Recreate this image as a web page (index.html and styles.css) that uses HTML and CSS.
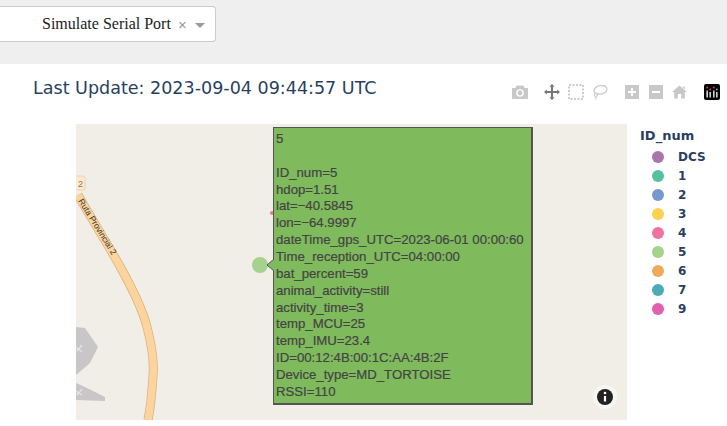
FILE: index.html
```html
<!DOCTYPE html>
<html lang="en">
<head>
    <meta charset="UTF-8">
    <title>Last Update</title>
    <link rel="stylesheet" href="styles.css">
</head>
<body>
    <div class="top-bar">
        <div class="dropdown">
            <span class="dropdown-value">Simulate Serial Port</span>
            <span class="dropdown-clear">&times;</span>
            <span class="dropdown-arrow"></span>
        </div>
    </div>

    <div class="graph">
        <div class="graph-head">
            <div class="graph-title">Last Update: 2023-09-04 09:44:57 UTC</div>
            <div class="modebar">
                <svg class="mode-icon camera" viewBox="0 0 16 16"><path d="M0 4h3.500l1.200-2.500h6.600L12.500 4H16v11H0z" fill="#c8c8c8"/><circle cx="8" cy="9" r="3.800" fill="#fff"/><circle cx="8" cy="9" r="2.400" fill="#c8c8c8"/></svg>
                <svg class="mode-icon pan" viewBox="0 0 16 16"><path d="M8 0l2.600 2.800H9v4.200h4.200V5.400L16 8l-2.800 2.600V9H9v4.200h1.600L8 16l-2.600-2.800H7V9H2.800v1.600L0 8l2.800-2.600V7H7V2.800H5.400z" fill="#777"/></svg>
                <svg class="mode-icon select" viewBox="0 0 16 16"><rect x="1" y="1" width="14" height="14" fill="none" stroke="#ccc" stroke-width="2" stroke-dasharray="2 1.500"/></svg>
                <svg class="mode-icon lasso" viewBox="0 0 16 16"><path d="M2 7c0-3 3-5.500 7-5.500 3.500 0 6 1.500 6 3.800 0 3-4 5-8 4.700C4 9.800 2 9 2 7z" fill="none" stroke="#ccc" stroke-width="1.300"/><circle cx="3.800" cy="11" r="1.500" fill="none" stroke="#ccc" stroke-width="1.200"/><path d="M4 12.500c.4 1 .2 2-.5 3" fill="none" stroke="#ccc" stroke-width="1.200"/></svg>
                <svg class="mode-icon zoom-in" viewBox="0 0 14 14"><rect width="14" height="14" fill="#c8c8c8"/><path d="M3 7h8M7 3v8" stroke="#fff" stroke-width="2"/></svg>
                <svg class="mode-icon zoom-out" viewBox="0 0 14 14"><rect width="14" height="14" fill="#c8c8c8"/><path d="M3 7h8" stroke="#fff" stroke-width="2"/></svg>
                <svg class="mode-icon home" viewBox="0 0 16 14"><path d="M8 0l8 7h-2.300v7H9.800V9.200H6.200V14H2.300V7H0zM11.500 1h2v3l-2-1.800z" fill="#c8c8c8"/></svg>
                <svg class="mode-icon logo" viewBox="0 0 16 16">
                    <rect width="16" height="16" rx="2" fill="#000"/>
                    <g fill="#fff">
                        <rect x="2.500" y="6.500" width="1.300" height="7"/>
                        <rect x="5.500" y="8" width="1.300" height="5.500"/>
                        <rect x="9.200" y="6.500" width="1.300" height="7"/>
                        <rect x="12.200" y="8" width="1.300" height="5.500"/>
                    </g>
                    <circle cx="3.200" cy="3.500" r=".9" fill="#ef3b7b"/>
                    <circle cx="6.200" cy="5.500" r=".9" fill="#ef3b7b"/>
                    <circle cx="9.800" cy="3.500" r=".9" fill="#ef3b7b"/>
                    <circle cx="12.800" cy="5.500" r=".9" fill="#5fc3e4"/>
                </svg>
            </div>
        </div>

        <div class="plot-row">
            <div class="map">
                <svg class="map-base" viewBox="0 0 551 296">
                    <path d="M0 203l9 1 13 19-8 16-14 12z" fill="#c8c6c6"/>
                    <path d="M0 259l9 4 20 10v4l-29-1z" fill="#c8c6c6"/>
                    <path d="M0 223l6 5M6 221l-5 6M0 267l6 4M6 265l-5 6" stroke="#e6e4e2" stroke-width="1.200"/>
                    <path d="M2 71C16 96 33 122 46 146C58 168 67 187 71 203C76 222 78 240 77 252C76 268 75 282 72 296" fill="none" stroke="#d8b378" stroke-width="9"/>
                    <path d="M2 71C16 96 33 122 46 146C58 168 67 187 71 203C76 222 78 240 77 252C76 268 75 282 72 296" fill="none" stroke="#fdd49e" stroke-width="7.500"/>
                    <text class="road-label" transform="translate(2 77) rotate(58)">Ruta Provincial 2</text>
                    <rect x="-6" y="52" width="15" height="14" rx="2" fill="#fbe9d2" stroke="#f0d3ad"/>
                    <text class="road-shield" x="2" y="63">2</text>
                    <circle cx="196" cy="89" r="2" fill="#ee7299"/>
                    <circle cx="184" cy="141" r="8" fill="#a5d28c"/>
                    <circle cx="529" cy="273" r="12" fill="#f7f6f3"/>
                    <circle cx="529" cy="273" r="8" fill="#222"/>
                    <circle cx="529" cy="269" r="1.300" fill="#fff"/>
                    <path d="M529 272v5.500" stroke="#fff" stroke-width="2.200"/>
                </svg>
                <div class="hover-box">
                    <div class="hover-line">5</div>
                    <div class="hover-line">&nbsp;</div>
                    <div class="hover-line">ID_num=5</div>
                    <div class="hover-line">hdop=1.51</div>
                    <div class="hover-line">lat=−40.5845</div>
                    <div class="hover-line">lon=−64.9997</div>
                    <div class="hover-line">dateTime_gps_UTC=2023-06-01 00:00:60</div>
                    <div class="hover-line">Time_reception_UTC=04:00:00</div>
                    <div class="hover-line">bat_percent=59</div>
                    <div class="hover-line">animal_activity=still</div>
                    <div class="hover-line">activity_time=3</div>
                    <div class="hover-line">temp_MCU=25</div>
                    <div class="hover-line">temp_IMU=23.4</div>
                    <div class="hover-line">ID=00:12:4B:00:1C:AA:4B:2F</div>
                    <div class="hover-line">Device_type=MD_TORTOISE</div>
                    <div class="hover-line">RSSI=110</div>
                </div>
                <svg class="hover-arrow" viewBox="0 0 8 14"><path d="M8 1L1 7l7 6" fill="#7fba5c" stroke="#555"/></svg>
            </div>

            <div class="legend">
                <div class="legend-title">ID_num</div>
                <div class="legend-item"><span class="legend-dot dot-dcs"></span>DCS</div>
                <div class="legend-item"><span class="legend-dot dot-1"></span>1</div>
                <div class="legend-item"><span class="legend-dot dot-2"></span>2</div>
                <div class="legend-item"><span class="legend-dot dot-3"></span>3</div>
                <div class="legend-item"><span class="legend-dot dot-4"></span>4</div>
                <div class="legend-item"><span class="legend-dot dot-5"></span>5</div>
                <div class="legend-item"><span class="legend-dot dot-6"></span>6</div>
                <div class="legend-item"><span class="legend-dot dot-7"></span>7</div>
                <div class="legend-item"><span class="legend-dot dot-9"></span>9</div>
            </div>
        </div>
    </div>
</body>
</html>
```

FILE: styles.css
```css
html, body {
    margin: 0;
    height: 426px;
    overflow: hidden;
    background-color: #fff;
}
.top-bar {
    height: 64px;
    box-sizing: border-box;
    padding-top: 6px;
    background-color: #efefef;
}
.dropdown {
    display: flex;
    align-items: center;
    width: 216px;
    height: 36px;
    box-sizing: border-box;
    padding-left: 42px;
    background-color: #fff;
    border: 1px solid #ccc;
    border-left: none;
    border-radius: 0 4px 4px 0;
}
.dropdown-value {
    font-family: "Liberation Serif", serif;
    font-size: 16px;
    color: #222;
}
.dropdown-clear {
    margin-left: 7px;
    font-family: "Liberation Sans", sans-serif;
    font-size: 15px;
    color: #999;
}
.dropdown-arrow {
    margin-left: 8px;
    margin-top: 2px;
    border-top: 5px solid #999;
    border-left: 5px solid transparent;
    border-right: 5px solid transparent;
}
.graph-head {
    display: flex;
    justify-content: space-between;
    height: 60px;
    padding-left: 33px;
}
.graph-title {
    margin-top: 12px;
    font-family: "DejaVu Sans", sans-serif;
    font-size: 17.55px;
    line-height: 24px;
    color: #2a3f5f;
}
.modebar {
    display: flex;
    align-items: center;
    height: 16px;
    margin-top: 20px;
    margin-right: 7px;
}
.mode-icon {
    display: block;
    width: 16px;
    height: 16px;
}
.pan {
    margin-left: 16px;
}
.select {
    margin-left: 8px;
}
.lasso {
    margin-left: 8px;
}
.zoom-in {
    width: 14px;
    height: 14px;
    margin-left: 17px;
}
.zoom-out {
    width: 14px;
    height: 14px;
    margin-left: 10px;
}
.home {
    width: 15px;
    height: 14px;
    margin-left: 9px;
}
.logo {
    margin-left: 17px;
}
.plot-row {
    display: flex;
    padding-left: 76px;
}
.map {
    position: relative;
    width: 551px;
    height: 296px;
    overflow: hidden;
    background-color: #f1eee8;
}
.map-base {
    position: absolute;
    left: 0;
    top: 0;
    width: 551px;
    height: 296px;
}
.road-label {
    font-family: "Liberation Sans", sans-serif;
    font-size: 8.5px;
    fill: #333;
}
.road-shield {
    font-family: "Liberation Sans", sans-serif;
    font-size: 9px;
    fill: #8a7a66;
}
.hover-box {
    position: absolute;
    left: 197px;
    top: 3px;
    width: 260px;
    height: 278px;
    box-sizing: border-box;
    padding: 2px 0 0 2px;
    background-color: #7fba5c;
    border: 1px solid #555;
    border-right-width: 2px;
    border-bottom-width: 2px;
    font-family: "Liberation Sans", sans-serif;
    font-size: 13.2px;
    color: #444;
    -webkit-text-stroke: 0.2px #444;
}
.hover-line {
    height: 16.87px;
    line-height: 17px;
    white-space: nowrap;
}
.hover-arrow {
    position: absolute;
    left: 190px;
    top: 134px;
    width: 8px;
    height: 14px;
}
.legend {
    padding: 3px 0 0 13px;
    font-family: "DejaVu Sans", sans-serif;
    font-weight: bold;
    color: #2a3f5f;
}
.legend-title {
    height: 20px;
    font-size: 13px;
    line-height: 18px;
}
.legend-item {
    display: flex;
    align-items: center;
    height: 19px;
    font-size: 12px;
}
.legend-dot {
    width: 12px;
    height: 12px;
    margin: 0 14px 0 12px;
    border-radius: 50%;
}
.dot-dcs { background-color: #ab74ad; }
.dot-1 { background-color: #55c1a0; }
.dot-2 { background-color: #7599cc; }
.dot-3 { background-color: #fad24f; }
.dot-4 { background-color: #f2729e; }
.dot-5 { background-color: #a5d28c; }
.dot-6 { background-color: #efa95a; }
.dot-7 { background-color: #4babb6; }
.dot-9 { background-color: #e05fb0; }
```
